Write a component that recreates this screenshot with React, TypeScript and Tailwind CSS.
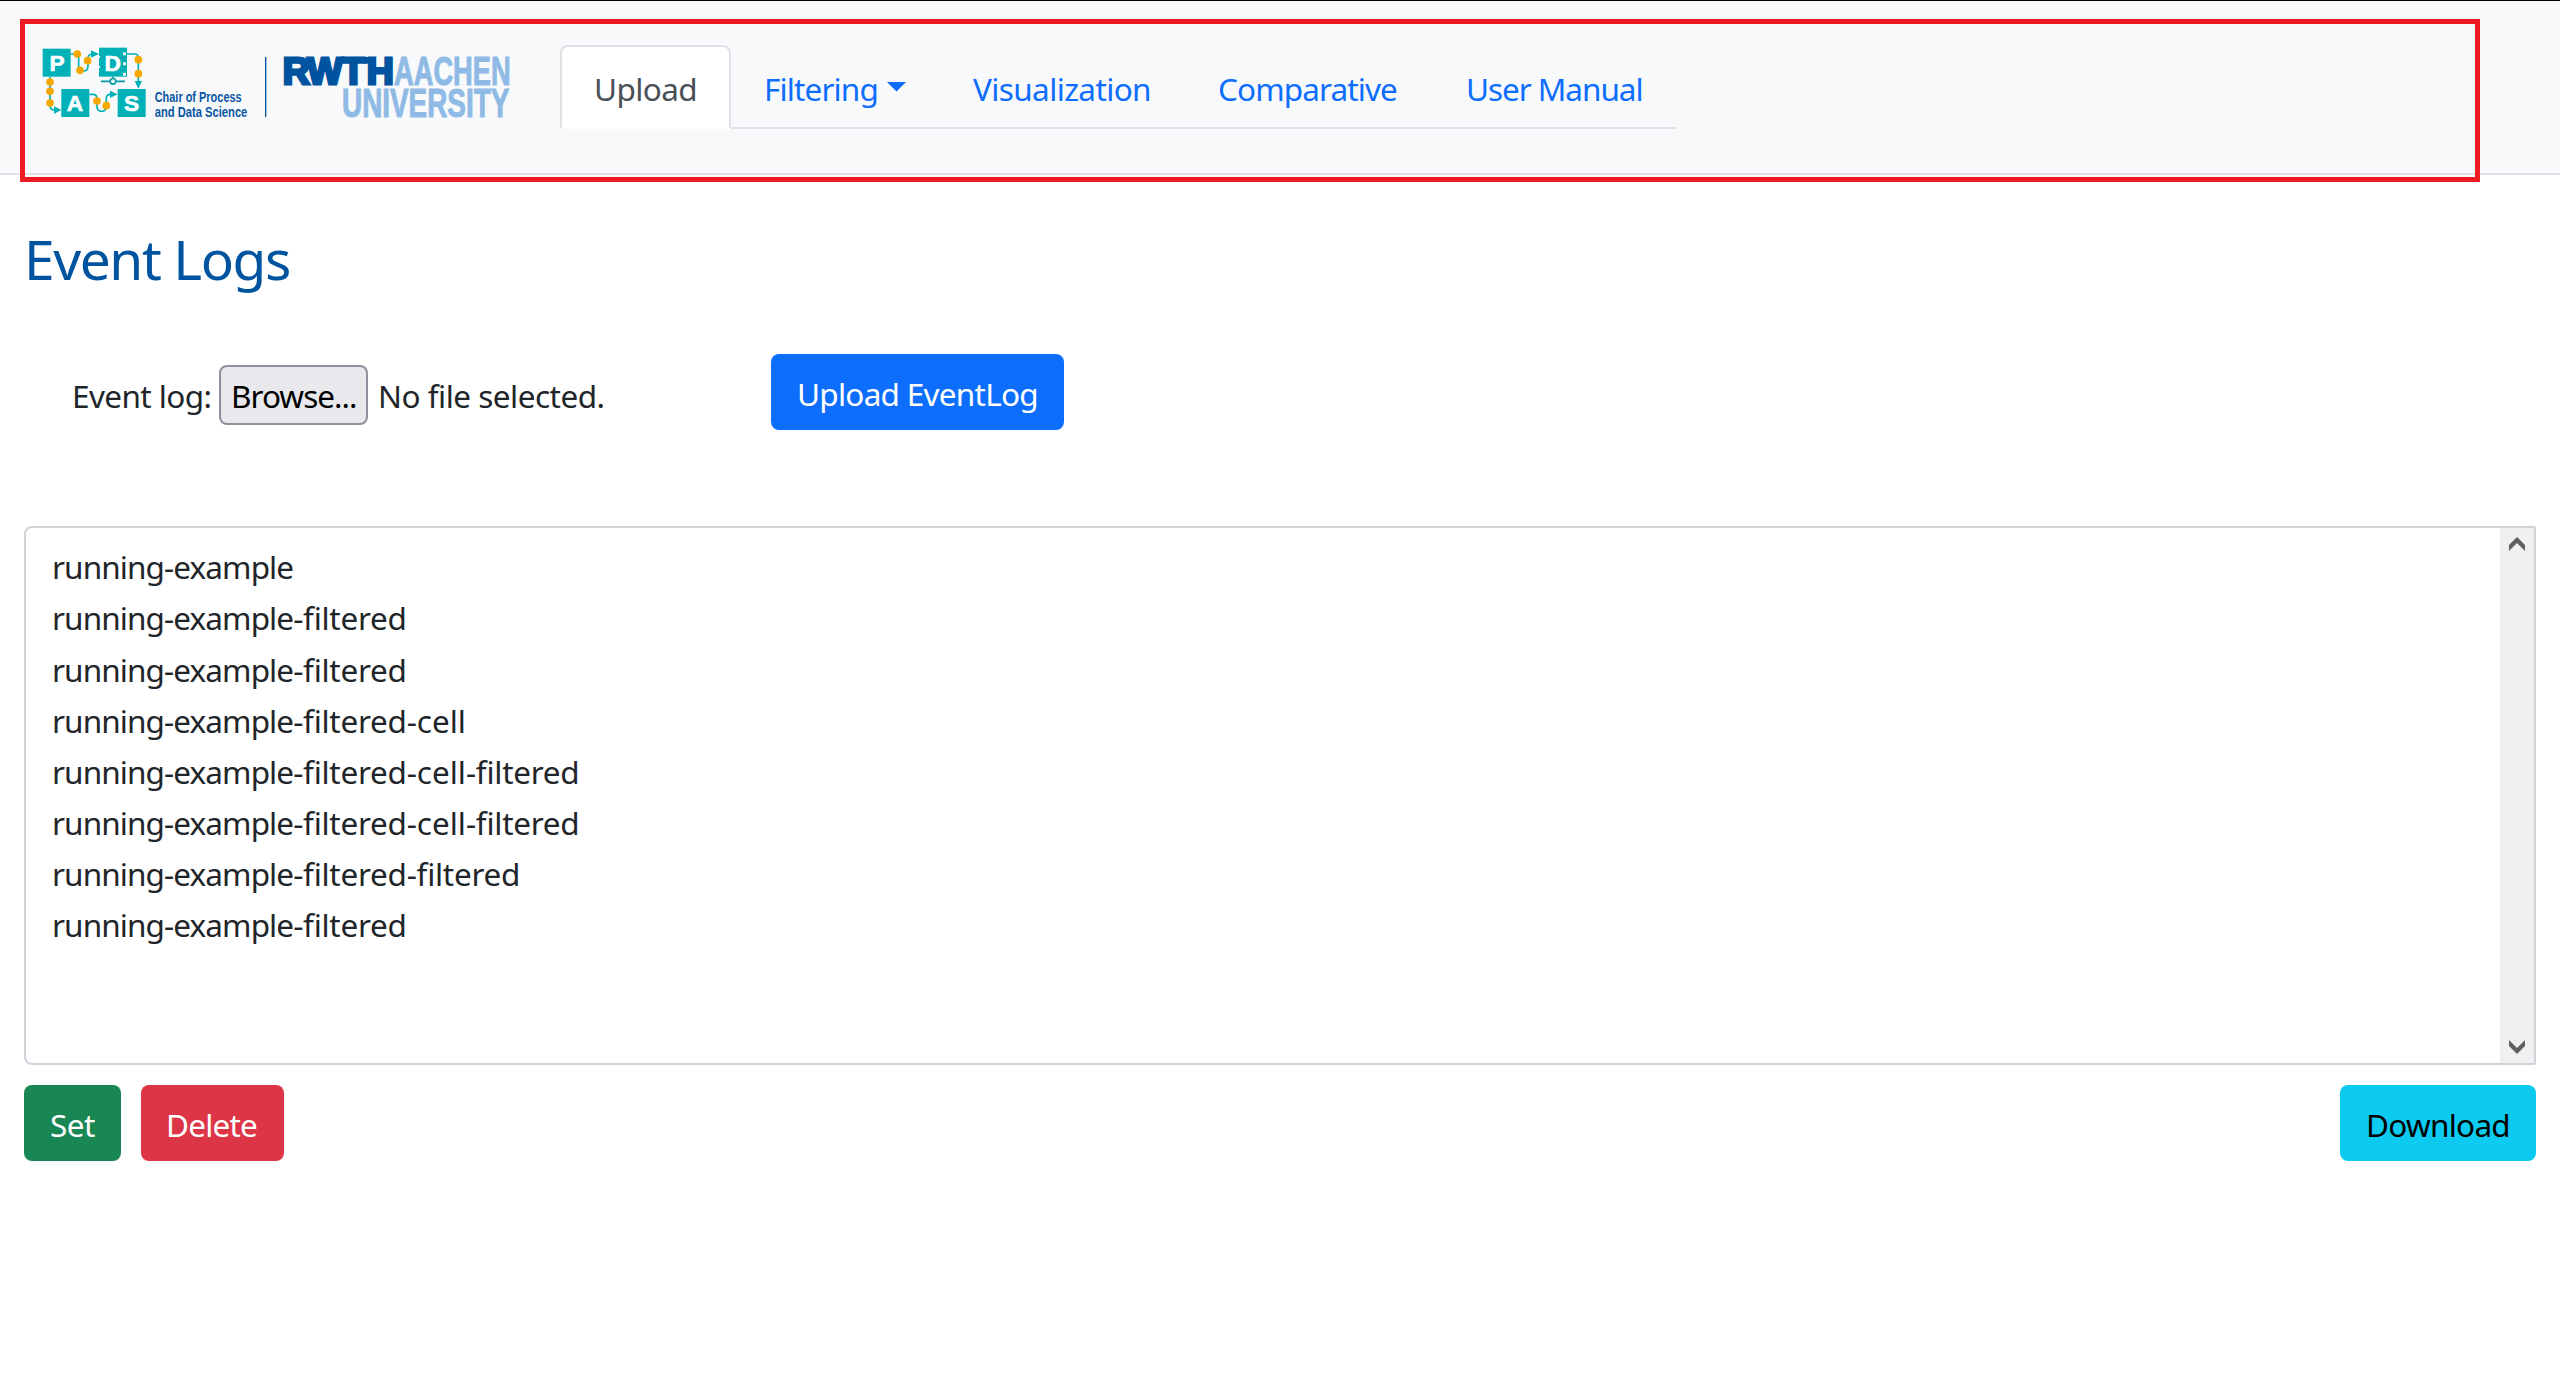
const segmentTracking: Record<string, string> = {
  "running-example": "tracking-[-0.9px]",
  "-filtered": "tracking-[-0.27px]",
  "-cell": "tracking-[0px]",
};

const eventLogs: string[][] = [
  ["running-example"],
  ["running-example", "-filtered"],
  ["running-example", "-filtered"],
  ["running-example", "-filtered", "-cell"],
  ["running-example", "-filtered", "-cell", "-filtered"],
  ["running-example", "-filtered", "-cell", "-filtered"],
  ["running-example", "-filtered", "-filtered"],
  ["running-example", "-filtered"],
];

function Logo() {
  const teal = "#00B1B7";
  const orange = "#F6A800";
  const dots = [
    [232, 162], [240, 211], [263, 182], [415, 179], [415, 221],
    [150, 246], [150, 274], [150, 309], [291, 303], [319, 317],
  ];
  return (
    <svg
      viewBox="120 135 1416 225"
      className="h-[75px] w-[472px] shrink-0 overflow-visible"
      fontFamily="'Liberation Sans', Arial, sans-serif"
      fontWeight="700"
    >
      <g fill="none" stroke={teal} strokeWidth="5">
        <path d="M212 162H228Q236 162 236 172V205Q236 213 244 213H250Q264 213 264 197V178Q264 162 276 162" />
        <path d="M380 162H404Q415 162 415 174V246" />
        <path d="M150 230V314Q150 330 164 330" />
        <path d="M268 283H279Q291 283 291 296V318Q291 334 305 334Q319 334 319 318V296Q319 283 331 283" />
      </g>
      <g fill={teal}>
        <path d="M273 151L297 162L273 173Z" />
        <path d="M404 243H426L415 266Z" />
        <path d="M162 319L184 330L162 341Z" />
        <path d="M330 272L353 283L330 294Z" />
        <rect x="128" y="146" width="84" height="84" />
        <rect x="297" y="143" width="84" height="87" />
        <rect x="184" y="267" width="84" height="84" />
        <rect x="353" y="267" width="84" height="84" />
      </g>
      <g stroke="#0a9aa3" strokeWidth="2">
        <path d="M297 172H318M297 201H318M360 172H381M360 201H381" />
      </g>
      <g fill="#f8f9fa">
        <rect x="369" y="157" width="9" height="9" rx="1" />
        <rect x="369" y="187" width="9" height="9" rx="1" />
        <rect x="369" y="218" width="9" height="9" rx="1" />
        <circle cx="298" cy="171" r="3" />
        <circle cx="298" cy="201" r="3" />
      </g>
      <path d="M303 244H375M339 230V238" stroke="#0a9aa3" strokeWidth="5" />
      <circle cx="339" cy="244" r="8.5" fill="#f8f9fa" stroke="#0a9aa3" strokeWidth="5" />
      {dots.map(([x, y]) => (
        <circle key={`${x}-${y}`} cx={x} cy={y} r="11.5" fill={orange} />
      ))}
      <g fill="#fff" stroke="#fff" strokeWidth="2" fontSize="68" textAnchor="middle">
        <text x="171" y="212">P</text>
        <text x="338" y="212">D</text>
        <text x="225" y="333">A</text>
        <text x="395" y="333">S</text>
      </g>
      <g fill="#0a56a4" fontSize="43">
        <text x="464" y="307" textLength="261" lengthAdjust="spacingAndGlyphs">Chair of Process</text>
        <text x="464" y="352" textLength="278" lengthAdjust="spacingAndGlyphs">and Data Science</text>
      </g>
      <rect x="795" y="171" width="4" height="180" fill="#00549f" />
      <g fill="#8ebae5" stroke="#8ebae5" strokeWidth="3" fontSize="120">
        <text x="1182" y="255" textLength="350" lengthAdjust="spacingAndGlyphs">AACHEN</text>
        <text x="1026" y="350" textLength="502" lengthAdjust="spacingAndGlyphs">UNIVERSITY</text>
      </g>
      <g fill="#00549f" stroke="#00549f" strokeWidth="9" fontSize="112">
        <text x="848 922 1026 1100" y="252.5">RWTH</text>
      </g>
      <rect x="1090" y="171" width="20" height="20" fill="#00549f" />
    </svg>
  );
}

function Chevron({ flip = false }: { flip?: boolean }) {
  return (
    <svg viewBox="0 0 16 14" className={flip ? "h-[14px] w-4 rotate-180" : "h-[14px] w-4"}>
      <path d="M8 0L16 8V14L8 6L0 14V8Z" fill="#606060" />
    </svg>
  );
}

function NavLink({ label, className }: { label: string; className: string }) {
  return (
    <a className={`flex h-[84px] shrink-0 items-center whitespace-nowrap border-2 border-transparent pt-[3px] text-[#0d6efd] ${className}`}>
      {label}
    </a>
  );
}

export default function App() {
  return (
    <div className="relative h-[1396px] w-[2560px] overflow-hidden bg-white font-['Noto_Sans',sans-serif] text-[31.5px] leading-[48px] text-[#212529]">
      <header className="flex h-[175px] items-start border-t border-b-2 border-t-black border-b-[#dee2e6] bg-[#f8f9fa] pt-11 pl-10">
        <Logo />
        <nav className="ml-12 flex h-[84px] w-[1117px] border-b-2 border-[#dee2e6]">
          <a className="flex h-[84px] w-[171px] shrink-0 items-center rounded-t-lg border-2 border-[#dee2e6] border-b-white bg-white pt-[3px] pl-8 tracking-[-0.6px] text-[#495057]">
            Upload
          </a>
          <a className="flex h-[84px] w-[209px] shrink-0 items-center border-2 border-transparent pt-[3px] pl-[31px] text-[#0d6efd]">
            <span className="w-[123px] tracking-[-0.86px]">Filtering</span>
            <svg viewBox="0 0 19 10" className="-mt-[4px] h-[10px] w-[19px]">
              <path d="M0 0H19L9.5 9.6Z" fill="#0d6efd" />
            </svg>
          </a>
          <NavLink label="Visualization" className="w-[246px] pl-[31px] tracking-[-0.62px]" />
          <NavLink label="Comparative" className="w-[247px] pl-[30px] tracking-[-0.89px]" />
          <NavLink label="User Manual" className="w-[244px] pl-[31px] tracking-[-1.05px]" />
        </nav>
      </header>

      <div className="pointer-events-none absolute top-[19px] left-[20px] h-[163px] w-[2460px] border-[5px] border-[#ed1c24]" />

      <main className="px-6 pt-[50px]">
        <h1 className="text-[55px] leading-[67px] tracking-[-1.4px] text-[#00549f]">Event Logs</h1>

        <div className="mt-[62px] flex h-[76px] items-center">
          <div className="flex w-[747px] items-center pt-[6px] pl-12">
            <span className="w-[147px] pt-[2px] whitespace-nowrap tracking-[-0.6px]">Event log:</span>
            <button className="flex h-[60px] w-[149px] items-center rounded-lg border-2 border-[#8f8f9d] bg-[#e9e9ed] pt-[2px] pl-[10px] tracking-[-0.97px] text-black">
              Browse...
            </button>
            <span className="ml-[10px] pt-[2px] whitespace-nowrap tracking-[-0.5px]">No file selected.</span>
          </div>
          <button className="flex h-[76px] w-[293px] items-center rounded-lg bg-[#0d6efd] pt-[3px] pl-[26px] tracking-[-0.73px] whitespace-nowrap text-white">
            Upload EventLog
          </button>
        </div>

        <div className="mt-24 flex h-[539px] overflow-hidden rounded-l-lg rounded-r-[2px] border-2 border-[#ced4da]">
          <ul className="flex-1 pt-[13.3px] pl-[26px] leading-[51.14px]">
            {eventLogs.map((segments, i) => (
              <li key={i} className="h-[51.14px] whitespace-nowrap">
                {segments.map((s, j) => (
                  <span key={j} className={segmentTracking[s]}>{s}</span>
                ))}
              </li>
            ))}
          </ul>
          <div className="flex w-[34px] flex-col items-center justify-between bg-[#f0f0f0] pt-[9px] pb-[9px]">
            <Chevron />
            <Chevron flip />
          </div>
        </div>

        <div className="mt-5 flex">
          <button className="flex h-[76px] w-[97px] items-center rounded-lg bg-[#198754] pt-[3px] pl-[26px] tracking-[-0.47px] text-white">
            Set
          </button>
          <button className="ml-5 flex h-[76px] w-[143px] items-center rounded-lg bg-[#dc3545] pt-[3px] pl-[25px] tracking-[-0.8px] text-white">
            Delete
          </button>
          <button className="ml-auto flex h-[76px] w-[196px] items-center rounded-lg bg-[#0dcaf0] pt-[3px] pl-[26px] tracking-[-0.74px] text-black">
            Download
          </button>
        </div>
      </main>
    </div>
  );
}
